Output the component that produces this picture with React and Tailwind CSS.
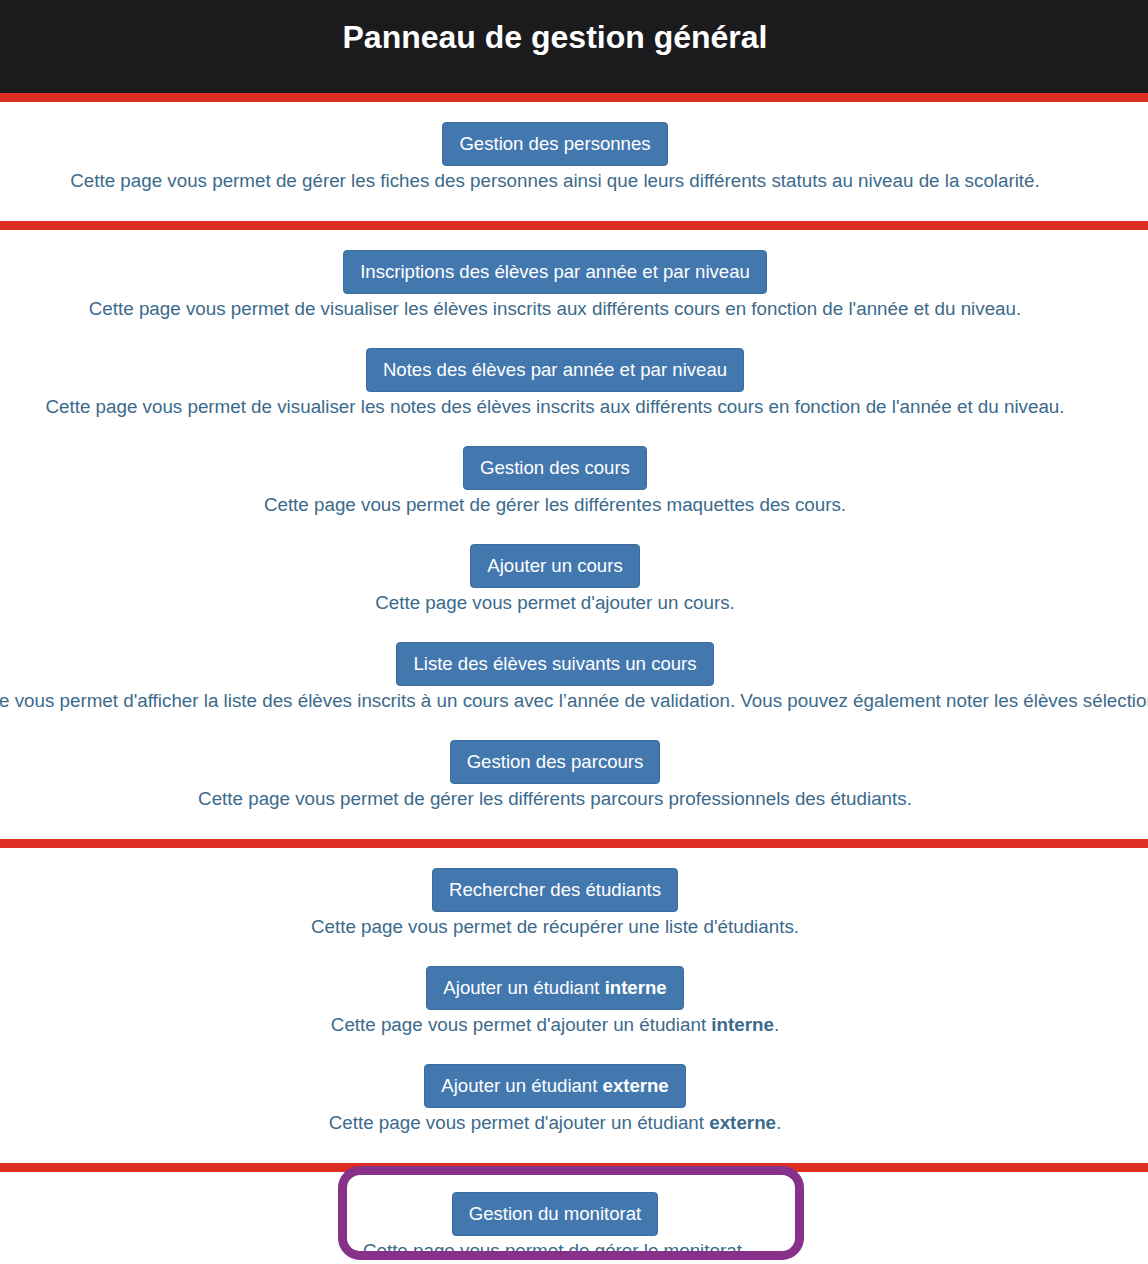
const SECTIONS = [
  [
    {
      label: "Gestion des personnes",
      desc: "Cette page vous permet de gérer les fiches des personnes ainsi que leurs différents statuts au niveau de la scolarité.",
    },
  ],
  [
    {
      label: "Inscriptions des élèves par année et par niveau",
      desc: "Cette page vous permet de visualiser les élèves inscrits aux différents cours en fonction de l'année et du niveau.",
    },
    {
      label: "Notes des élèves par année et par niveau",
      desc: "Cette page vous permet de visualiser les notes des élèves inscrits aux différents cours en fonction de l'année et du niveau.",
    },
    {
      label: "Gestion des cours",
      desc: "Cette page vous permet de gérer les différentes maquettes des cours.",
    },
    {
      label: "Ajouter un cours",
      desc: "Cette page vous permet d'ajouter un cours.",
    },
    {
      label: "Liste des élèves suivants un cours",
      desc: "Cette page vous permet d'afficher la liste des élèves inscrits à un cours avec l’année de validation. Vous pouvez également noter les élèves sélectionnés.",
    },
    {
      label: "Gestion des parcours",
      desc: "Cette page vous permet de gérer les différents parcours professionnels des étudiants.",
    },
  ],
  [
    {
      label: "Rechercher des étudiants",
      desc: "Cette page vous permet de récupérer une liste d'étudiants.",
    },
    {
      label: <>Ajouter un étudiant <b>interne</b></>,
      desc: <>Cette page vous permet d'ajouter un étudiant <b>interne</b>.</>,
    },
    {
      label: <>Ajouter un étudiant <b>externe</b></>,
      desc: <>Cette page vous permet d'ajouter un étudiant <b>externe</b>.</>,
    },
  ],
  [
    {
      label: "Gestion du monitorat",
      desc: "Cette page vous permet de gérer le monitorat.",
    },
  ],
];

function Item({ label, desc }) {
  return (
    <div className="flex flex-col items-center">
      <button className="h-[44px] px-[16px] rounded-[4px] bg-[#4378af] text-white text-[18.6px] border border-[#3a6c9f] whitespace-nowrap">
        {label}
      </button>
      <p className="mt-[4px] h-[22px] leading-[22px] text-[18.8px] text-[#3b6a8c] whitespace-nowrap">
        {desc}
      </p>
    </div>
  );
}

export default function App() {
  return (
    <div
      className="relative w-[1148px] h-[1264px] bg-white overflow-hidden"
      style={{ fontFamily: '"Liberation Sans", Arial, sans-serif' }}
    >
      <div className="h-[1252px] overflow-hidden">
        <header className="h-[93px] bg-[#1b1b1d]">
          <div className="w-[1110px] flex justify-center pt-[17px]">
            <h1 className="text-white font-bold text-[32px] leading-[40px]">
              Panneau de gestion général
            </h1>
          </div>
        </header>
        {SECTIONS.map((items, i) => (
          <section key={i} className="border-t-[9px] border-[#dc2e22]">
            <div className="w-[1110px] flex flex-col items-center gap-[28px] pt-[20px] pb-[29px]">
              {items.map((it, j) => (
                <Item key={j} {...it} />
              ))}
            </div>
          </section>
        ))}
      </div>
      <div className="absolute left-[338px] top-[1166px] w-[466px] h-[94px] border-[9px] border-[#87318b] rounded-[22px]" />
    </div>
  );
}
